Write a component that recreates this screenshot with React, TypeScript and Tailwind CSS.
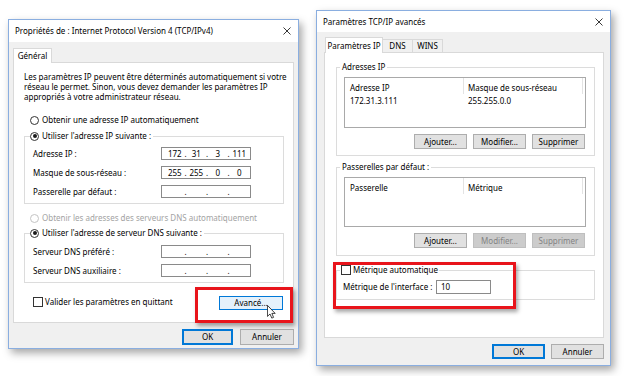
import React from "react";

const font = "font-['Noto_Sans',sans-serif] text-[8px] leading-[10px] text-black";

function Btn({ label, w, h, kind }: { label: string; w: string; h: string; kind?: "def" | "hover" | "off" }) {
  let tone = "bg-[#e1e1e1] border border-[#adadad]";
  if (kind === "def") tone = "bg-[#e1e1e1] border-2 border-[#0078d7]";
  if (kind === "hover") tone = "bg-[#e5f1fb] border border-[#0078d7]";
  if (kind === "off") tone = "bg-[#cccccc] border border-[#bfbfbf] text-[#838383]";
  return <div className={`${w} ${h} ${tone} flex items-center justify-center shrink-0`}>{label}</div>;
}

function Radio({ on, off, label }: { on?: boolean; off?: boolean; label: string }) {
  return (
    <div className="flex items-center gap-[3px] h-[10px]">
      <span className={`w-[9px] h-[9px] rounded-full border bg-white flex items-center justify-center ${off ? "border-[#c4c4c4]" : "border-[#333]"}`}>
        {on && <span className="w-[4px] h-[4px] rounded-full bg-[#1a1a1a]" />}
      </span>
      <span className={`whitespace-nowrap ${off ? "text-[#a3a3a3]" : ""}`}>{label}</span>
    </div>
  );
}

function Check({ label }: { label: string }) {
  return (
    <div className="flex items-center gap-[2px] h-[10px]">
      <span className="w-[10px] h-[10px] border border-[#333] bg-white" />
      <span className="whitespace-nowrap">{label}</span>
    </div>
  );
}

function IpField({ v }: { v?: string[] }) {
  const parts = v ?? ["", "", "", ""];
  return (
    <div className="w-[90px] h-[13px] border border-[#8a8a8a] bg-white flex items-center pl-[2px]">
      {parts.map((p, i) => (
        <React.Fragment key={i}>
          {i > 0 && <span className="w-0 flex justify-center">.</span>}
          <span className="flex-1 text-center">{p}</span>
        </React.Fragment>
      ))}
    </div>
  );
}

function IpRow({ label, v, mt }: { label: string; v?: string[]; mt: string }) {
  return (
    <div className={`flex items-center justify-between pl-[3px] pr-[27px] ${mt}`}>
      <span className="whitespace-nowrap">{label}</span>
      <IpField v={v} />
    </div>
  );
}

function TitleBar({ title, h }: { title: string; h: string }) {
  return (
    <div className={`${h} bg-white flex items-center justify-between pl-[6px] pr-[7px] shrink-0`}>
      <span className="whitespace-nowrap">{title}</span>
      <svg width="8" height="8" viewBox="0 0 8 8" className="text-[#222]">
        <path d="M0.5 0.5 L7.5 7.5 M7.5 0.5 L0.5 7.5" stroke="currentColor" strokeWidth="0.9" />
      </svg>
    </div>
  );
}

function ListView({ h, cols, row }: { h: string; cols: [string, string]; row?: [string, string] }) {
  return (
    <div className={`ml-[4px] ${h} border border-[#a9a9a9] bg-white`}>
      <div className="flex h-[16px]">
        <div className="w-[119px] pl-[5px] pt-[5px] border-r border-[#e3e3e3]">{cols[0]}</div>
        <div className="flex-1 pl-[4px] pt-[5px] border-r border-[#e3e3e3] mr-[2px]">{cols[1]}</div>
      </div>
      {row && (
        <div className="flex mt-[2px]">
          <div className="w-[119px] pl-[5px]">{row[0]}</div>
          <div className="flex-1 pl-[4px]">{row[1]}</div>
        </div>
      )}
    </div>
  );
}

function BtnRow({ off, mt }: { off?: boolean; mt: string }) {
  return (
    <div className={`flex justify-end gap-[6px] pr-[1px] ${mt}`}>
      <Btn label="Ajouter..." w="w-[53px]" h="h-[15px]" />
      <Btn label="Modifier..." w="w-[53px]" h="h-[15px]" kind={off ? "off" : undefined} />
      <Btn label="Supprimer" w="w-[53px]" h="h-[15px]" kind={off ? "off" : undefined} />
    </div>
  );
}

function Ipv4Dialog() {
  return (
    <div className="absolute left-[8px] top-[19px] w-[291px] h-[330px] border border-[#8aaee0] bg-[#f0f0f0] shadow-[3px_4px_8px_rgba(0,0,0,0.35)] flex flex-col">
      <TitleBar title="Propriétés de : Internet Protocol Version 4 (TCP/IPv4)" h="h-[22px]" />
      <div className="px-[4px] pt-[6px]">
        <div className="flex items-end">
          <div className="relative z-10 -mb-px h-[15px] w-[39px] bg-white border border-b-0 border-[#d9d9d9] flex items-center justify-center">Général</div>
        </div>
        <div className="h-[261px] bg-white border border-[#d9d9d9] pt-[9px]">
          <p className="pl-[10px] whitespace-nowrap">
            Les paramètres IP peuvent être déterminés automatiquement si votre<br />
            réseau le permet. Sinon, vous devez demander les paramètres IP<br />
            appropriés à votre administrateur réseau.
          </p>
          <div className="pl-[16px] mt-[13px]">
            <Radio label="Obtenir une adresse IP automatiquement" />
          </div>
          <fieldset className="ml-[10px] mr-[9px] mt-[6px] border border-[#dcdcdc] pl-[5px] pr-[5px] pb-[5px]">
            <legend className="pr-[2px]"><Radio on label="Utiliser l'adresse IP suivante :" /></legend>
            <IpRow label="Adresse IP :" v={["172", "31", "3", "111"]} mt="mt-[6px]" />
            <IpRow label="Masque de sous-réseau :" v={["255", "255", "0", "0"]} mt="mt-[6px]" />
            <IpRow label="Passerelle par défaut :" mt="mt-[6px]" />
          </fieldset>
          <div className="pl-[16px] mt-[9px]">
            <Radio off label="Obtenir les adresses des serveurs DNS automatiquement" />
          </div>
          <fieldset className="ml-[10px] mr-[9px] mt-[5px] border border-[#dcdcdc] pl-[5px] pr-[5px] pb-[5px]">
            <legend className="pr-[2px]"><Radio on label="Utiliser l'adresse de serveur DNS suivante :" /></legend>
            <IpRow label="Serveur DNS préféré :" mt="mt-[7px]" />
            <IpRow label="Serveur DNS auxiliaire :" mt="mt-[6px]" />
          </fieldset>
          <div className="flex justify-between items-start pl-[19px] pr-[10px] mt-[13px]">
            <div className="mt-[1px]"><Check label="Valider les paramètres en quittant" /></div>
            <Btn label="Avancé..." w="w-[64px]" h="h-[14px]" kind="hover" />
          </div>
        </div>
        <div className="flex justify-end gap-[7px] mt-[6px]">
          <Btn label="OK" w="w-[51px]" h="h-[16px]" kind="def" />
          <Btn label="Annuler" w="w-[54px]" h="h-[16px]" />
        </div>
      </div>
    </div>
  );
}

function AdvancedDialog() {
  return (
    <div className="absolute left-[316px] top-[10px] w-[295px] h-[356px] border border-[#8aaee0] bg-[#f0f0f0] shadow-[3px_4px_8px_rgba(0,0,0,0.35)] flex flex-col">
      <TitleBar title="Paramètres TCP/IP avancés" h="h-[21px]" />
      <div className="pl-[7px] pr-[6px] pt-[5px]">
        <div className="flex items-end pl-px">
          <div className="relative z-10 -mb-px h-[16px] w-[58px] bg-white border border-b-0 border-[#d9d9d9] flex items-center justify-center whitespace-nowrap">Paramètres IP</div>
          <div className="h-[13px] w-[30px] bg-[#f0f0f0] border border-l-0 border-b-0 border-[#d9d9d9] flex items-center justify-center">DNS</div>
          <div className="h-[13px] w-[30px] bg-[#f0f0f0] border border-l-0 border-b-0 border-[#d9d9d9] flex items-center justify-center">WINS</div>
        </div>
        <div className="h-[286px] bg-white border border-[#d9d9d9] pt-[9px]">
          <fieldset className="ml-[11px] mr-[8px] border border-[#dcdcdc] pl-[3px] pr-[8px] pb-[6px]">
            <legend className="px-[2px]">Adresses IP</legend>
            <ListView h="h-[51px] mt-[5px]" cols={["Adresse IP", "Masque de sous-réseau"]} row={["172.31.3.111", "255.255.0.0"]} />
            <BtnRow mt="mt-[6px]" />
          </fieldset>
          <fieldset className="ml-[11px] mr-[8px] mt-[6px] border border-[#dcdcdc] pl-[3px] pr-[8px] pb-[7px]">
            <legend className="px-[2px]">Passerelles par défaut :</legend>
            <ListView h="h-[50px] mt-[5px]" cols={["Passerelle", "Métrique"]} />
            <BtnRow off mt="mt-[6px]" />
          </fieldset>
          <fieldset className="ml-[11px] mr-[8px] mt-[9px] border border-[#dcdcdc] pl-[3px] pr-[8px] pb-[5px]">
            <legend className="px-[1px]"><Check label="Métrique automatique" /></legend>
            <div className="flex items-center pl-[3px] mt-[5px]">
              <span className="w-[93px] whitespace-nowrap">Métrique de l'interface :</span>
              <div className="w-[55px] h-[14px] border border-[#8a8a8a] bg-white pl-[4px] flex items-center">10</div>
            </div>
          </fieldset>
        </div>
        <div className="flex justify-end gap-[6px] mt-[6px]">
          <Btn label="OK" w="w-[53px]" h="h-[15px]" kind="def" />
          <Btn label="Annuler" w="w-[53px]" h="h-[15px]" />
        </div>
      </div>
    </div>
  );
}

export default function App() {
  return (
    <div className={`relative w-[638px] h-[376px] bg-white overflow-hidden ${font}`}>
      <Ipv4Dialog />
      <AdvancedDialog />
      {/* highlight callouts */}
      <div className="absolute left-[195px] top-[287px] w-[98px] h-[36px] border-[3px] border-[#e8141b] shadow-[2px_3px_4px_rgba(0,0,0,0.35)]" />
      <div className="absolute left-[333px] top-[262px] w-[183px] h-[47px] border-[3px] border-[#e8141b] shadow-[2px_3px_4px_rgba(0,0,0,0.35)]" />
      <svg className="absolute left-[267px] top-[305px]" width="9" height="14" viewBox="0 0 12 19">
        <path d="M0.5 0.5 L0.5 15.5 L4 12.2 L6.4 17.8 L8.8 16.8 L6.5 11.4 L11 11.4 Z" fill="#fff" stroke="#000" strokeWidth="1" strokeLinejoin="round" />
      </svg>
    </div>
  );
}
